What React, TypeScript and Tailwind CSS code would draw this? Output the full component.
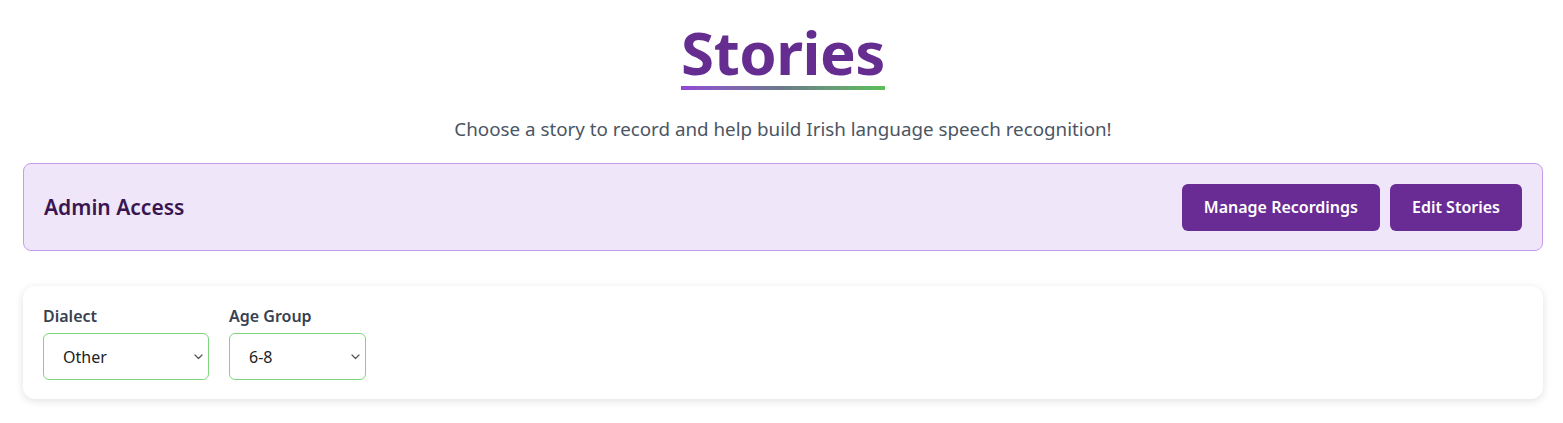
import React from "react";

function Chevron() {
  return (
    <svg className="pointer-events-none absolute right-[6px] top-1/2 -translate-y-1/2" width="9" height="6" viewBox="0 0 9 6" fill="none">
      <path d="M1 1l3.5 3.5L8 1" stroke="#555" strokeWidth="1.2" strokeLinecap="round" strokeLinejoin="round" />
    </svg>
  );
}

function Select({ label, value, options, width }: { label: string; value: string; options: string[]; width: string }) {
  return (
    <div className="flex flex-col">
      <label className="text-[16px] font-semibold text-[#374151] leading-[22px] mb-[6px]">{label}</label>
      <div className={`relative ${width}`}>
        <select
          defaultValue={value}
          className="w-full h-[47px] appearance-none rounded-[6px] border border-[#7fd680] bg-white pl-[19px] pr-[24px] text-[16px] text-[#222] outline-none"
          style={{ fontFamily: "inherit" }}
        >
          {options.map((o) => (
            <option key={o}>{o}</option>
          ))}
        </select>
        <Chevron />
      </div>
    </div>
  );
}

export default function App() {
  return (
    <div className="min-h-screen bg-white pl-[23px] pr-[20px]" style={{ fontFamily: '"Noto Sans", "Open Sans", sans-serif' }}>
      <div className="flex flex-col items-center pt-[18px]">
        <div className="flex flex-col items-stretch">
          <h1 className="text-[60px] font-bold leading-[68px] text-[#662d91] tracking-[-0.5px]">Stories</h1>
          <div className="h-[4px] bg-gradient-to-r from-[#9147d4] via-[#6b7a8a] to-[#5cbf55]" />
        </div>
        <p className="mt-[27px] text-[18.8px] leading-[25px] text-[#4b5563]">
          Choose a story to record and help build Irish language speech recognition!
        </p>
      </div>

      <div className="mt-[21px] flex h-[88px] items-center justify-between rounded-[8px] border border-[#c79ce8] bg-[#f0e6f9] px-[20px]">
        <h2 className="text-[21px] font-semibold text-[#3a1650] pt-[2px]">Admin Access</h2>
        <div className="flex gap-[10px]">
          <button className="h-[47px] rounded-[6px] bg-[#682c94] px-[22px] text-[16px] font-semibold text-white">Manage Recordings</button>
          <button className="h-[47px] rounded-[6px] bg-[#682c94] px-[22px] text-[16px] font-semibold text-white">Edit Stories</button>
        </div>
      </div>

      <div className="mt-[35px] rounded-[12px] bg-white px-[20px] pt-[19px] pb-[19px] shadow-[0_2px_8px_rgba(0,0,0,0.12)]">
        <div className="flex gap-[20px]">
          <Select label="Dialect" value="Other" options={["Munster", "Connacht", "Ulster", "Other"]} width="w-[166px]" />
          <Select label="Age Group" value="6-8" options={["3-5", "6-8", "9-12"]} width="w-[137px]" />
        </div>
      </div>
    </div>
  );
}
